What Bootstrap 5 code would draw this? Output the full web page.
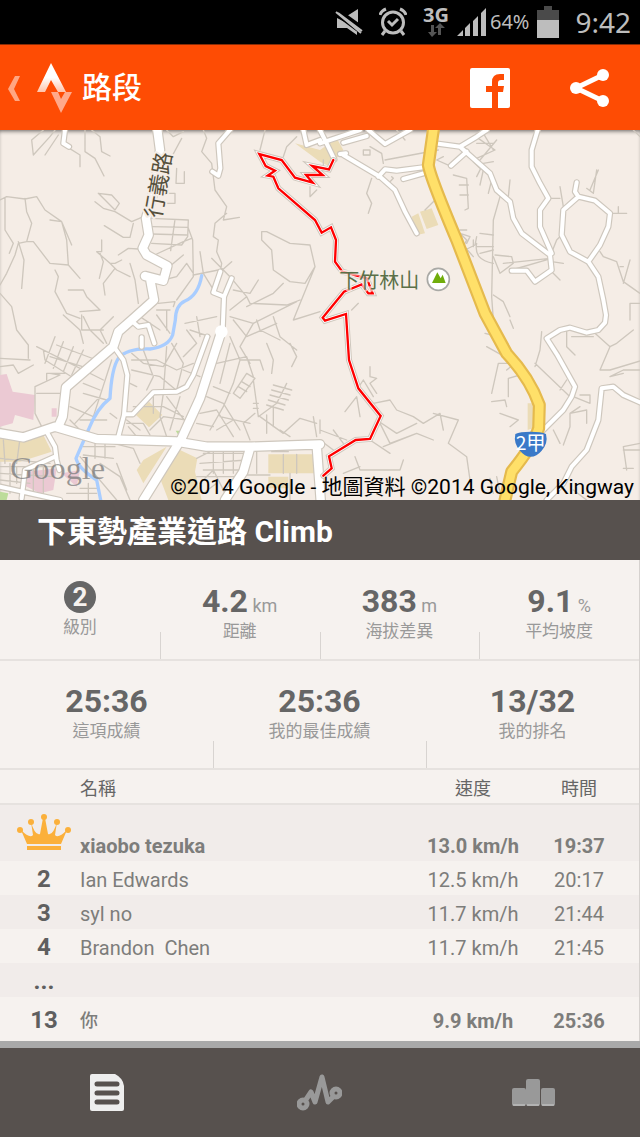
<!DOCTYPE html>
<html lang="zh-Hant">
<head>
<meta charset="utf-8">
<meta name="viewport" content="width=device-width, initial-scale=1">
<title>路段</title>
<link href="https://cdn.jsdelivr.net/npm/bootstrap@5.3.0/dist/css/bootstrap.min.css" rel="stylesheet">
<style>
  body { font-family: Roboto, "Noto Sans CJK TC", sans-serif; background: #fff; color: #666; }
  svg { display: block; flex-shrink: 0; }
  .status { background: #000; color: #bdbdbd; height: 44px; padding-right: 9px; }
  .net { font-size: 20px; line-height: 16px; font-weight: 700; font-family: "Open Sans", sans-serif; }
  .pct { font-size: 20px; line-height: 44px; font-family: "Noto Sans", sans-serif; }
  .clock { font-size: 28px; line-height: 44px; font-family: "Noto Sans", sans-serif; }
  .topbar { background: #fe4c04; height: 86px; border-top: 1px solid #8a2c06; }
  .topbar h1 { font-size: 30px; line-height: 40px; font-weight: 500; }
  .action { width: 100px; height: 84px; border: 0; }
  .map-view { height: 370px; background: #f5ede6; box-shadow: inset 0 3px 4px -2px #0009; }
  .credit { font-size: 21px; line-height: 26px; color: #000; right: 6px; bottom: 0; }
  .heading { background: #57514e; color: #fff; height: 60px; padding-left: 37px; }
  .heading h2 { font-size: 30px; line-height: 63px; font-weight: 700; }
  .panel { background: #f6f2ef; border-right: 1px solid #d6d2cf; }
  .stats { border-bottom: 2px solid #e6e2df; }
  .stats-a { height: 101px; }
  .stats-b { height: 109px; }
  .stat { padding-top: 20px; position: relative; }
  .stats-a .stat { padding-top: 21px; }
  .stat + .stat::before { content: ""; position: absolute; left: 0; bottom: 0; height: 27px; border-left: 1px solid #d8d4d1; }
  .num { font-size: 32px; line-height: 40px; font-weight: 700; color: #666; }
  .unit { font-size: 18px; line-height: 20px; font-weight: 400; color: #999; }
  .cap { font-size: 17px; line-height: 20px; color: #999; }
  .level { width: 32px; height: 32px; line-height: 32px; font-size: 26px; background: #666; color: #f6f2ef; }
  .board { table-layout: fixed; color: #7d7d7b; font-size: 20px; line-height: 24px; }
  .board th, .board td { padding: 4px 0 0; vertical-align: middle; }
  .board thead th { height: 34px; font-size: 18px; font-weight: 400; color: #666; border-bottom: 2px solid #e6e2df; }
  .board tbody tr { height: 34px; }
  .board tbody tr:nth-child(odd) { background: #f1ecea; }
  .board tbody .leader { height: 57px; }
  .board .leader td { padding-top: 26px; }
  .board tbody .mine { height: 44px; }
  .board .rank { font-size: 24px; font-weight: 700; color: #5f5f5f; padding: 2px 0 0 8px; text-align: center; }
  .you { font-size: 18px; font-weight: 500; }
  .c-rank { width: 80px; }
  .c-val { width: 106px; }
  .c-end { width: 7px; }
  .tabs { background: #57514e; border-top: 7px solid #a9a9a9; height: 96px; }
</style>
</head>
<body>
<div class="status d-flex justify-content-end align-items-center">
  <svg width="28" height="28" viewBox="0 0 28 28" fill="#bdbdbd"><path d="M2 10L10 14 18 19 22 22V27L12 20H2ZM12 8L23 1V15Z"/><path d="M0 4L28 25M3 3L28 21" stroke="#000" stroke-width="5"/><path d="M1 4L26 25M3 5L27 23" stroke="#bdbdbd" stroke-width="2"/></svg>
  <svg class="ms-3" width="28" height="30" viewBox="0 0 28 30" fill="none" stroke="#bdbdbd" stroke-width="3"><circle cx="14" cy="15.500" r="10.500"/><path d="M9 14L13 18 19 12M6 24L3 28M22 24L25 28M1 8Q2 4 7 2M27 8Q26 4 21 2"/></svg>
  <div class="ms-3 d-flex flex-column align-items-center"><span class="net">3G</span>
    <svg width="18" height="14" viewBox="0 0 18 14" fill="#555"><path d="M4 2H7V9H10L5 14 1 9H4ZM11 12V5H8L13 0 18 5H14V12Z"/></svg></div>
  <svg class="ms-2" width="29" height="28" viewBox="0 0 29 28" fill="#bdbdbd"><path d="M0 28L6 22V28ZM8 20L13 15V28H8ZM16 13L21 8V28H16ZM24 5L29 0V28H24Z"/></svg>
  <span class="pct ms-1">64%</span>
  <svg class="ms-2" width="22" height="32" viewBox="0 0 22 32"><path d="M7 0H15V4H22V14H0V4H7Z" fill="#4a4a4a"/><path d="M0 14H22V32H0Z" fill="#bdbdbd"/></svg>
  <span class="clock ms-3">9:42</span>
</div>
<header class="topbar d-flex align-items-center">
  <a href="#" class="d-flex align-items-center text-white text-decoration-none ps-2" aria-label="返回">
    <svg width="66" height="52" viewBox="0 0 66 52">
      <defs><linearGradient id="peak" x2="0" y2="1"><stop offset=".5" stop-color="#fff"/><stop offset="1" stop-color="#ffc4ab"/></linearGradient></defs>
      <path d="M7 14H12L6 27 12 39H7L0 27Z" fill="#ffa682"/>
      <path d="M43 1L58 30H50L43 18 37 30H29Z" fill="url(#peak)"/>
      <path d="M43 30H50L53 37 57 30H64L53 51Z" fill="#ffa98a"/>
    </svg>
  </a>
  <h1 class="m-0 ms-2 text-white">路段</h1>
  <button class="action btn ms-auto p-0 d-flex align-items-center justify-content-center" aria-label="Facebook">
    <svg width="40" height="40" viewBox="0 0 40 40"><rect width="40" height="40" rx="2" fill="#fff"/><path d="M22 40V24H16V18H22V14Q22 6 30 6H34V12H31Q28 12 28 15V18H34L33 24H28V40Z" fill="#fe4c04"/></svg>
  </button>
  <button class="action btn p-0 d-flex align-items-center justify-content-center" aria-label="分享">
    <svg width="40" height="38" viewBox="0 0 40 38"><path d="M33 6L6 19 33 32" fill="none" stroke="#fff" stroke-width="5"/><g fill="#fff"><circle cx="33" cy="6" r="6"/><circle cx="6" cy="19" r="6"/><circle cx="33" cy="32" r="6"/></g></svg>
  </button>
</header>
<main>
<section class="map-view position-relative overflow-hidden">
<svg class="w-100 h-100" viewBox="0 0 1920 1110" preserveAspectRatio="xMidYMid slice" fill="none" stroke-linejoin="round" stroke-linecap="round">
  <defs>
    <g id="main-roads">
      <path d="M472 0L480 60 465 170 438 265 446 315 428 355 440 375 502 408 490 452 435 438M450 445L462 510 395 570 355 605 340 650 198 772 188 860 175 890"/>
      <path d="M0 910L70 922 165 890 290 927 525 934 620 950 755 950 960 943M664 605L600 805 545 925 430 1110M750 955L730 1025 675 1110M950 945L962 1110"/>
    </g>
    <g id="side-roads">
      <path d="M195 0L190 40 207 50M690 0L655 40 661 115 655 137 637 125M661 425L640 487 672 500 695 445M672 500L668 600"/>
      <path d="M345 655L370 690 382 735 372 855 355 920M372 853L398 853 460 787 530 785 560 770 580 735 622 620M398 575L415 590 445 585 463 640M425 622V650M140 905L165 950 170 990 178 1020M165 980L75 1020 65 1105M0 1070L90 1090 180 1110"/>
      <path d="M960 0L975 30 1003 88M960 40L1080 0M910 0L920 45 960 30M1030 38L1100 18M1105 0L1155 42 1230 0M1020 72L1038 70M1030 75L1140 140 1185 180 1215 245 1250 310M1135 140L1155 118 1190 122 1270 112M1210 147L1270 130"/>
      <path d="M1305 40L1380 50 1430 20 1460 0M1380 50L1470 130 1490 180 1530 215 1540 265 1565 310 1650 375 1655 420 1605 455 1580 422H1535M1400 65L1353 107M1613 0L1595 60 1595 110 1620 160 1645 205 1620 240 1620 290 1655 370"/>
      <path d="M1730 157L1725 185 1735 200 1785 212 1830 250 1825 290 1800 345 1765 395 1710 365 1685 315 1690 240 1735 200M1765 395L1795 440 1810 510 1818 555 1815 578 1795 600 1760 608 1710 593 1680 600 1640 625 1672 675 1725 770 1715 800 1690 840 1625 905"/>
      <path d="M1960 835L1870 795 1840 770 1805 775 1795 870 1760 960 1715 1010 1690 1060 1640 1110"/>
    </g>
    <path id="highway" d="M1300 0L1285 105Q1290 140 1370 330L1455 550 1520 670Q1590 745 1618 825L1616 895Q1600 945 1535 1025L1515 1110"/>
    <path id="ride" d="M1000 90L987 118 937 108 968 135 918 135 938 158 885 143 845 90 778 72 797 108 825 122 803 137 820 140 835 175 945 270 965 308 993 292 1008 330 1005 395 1027 425 1100 445 1118 490 1105 490 1085 463 1032 485 968 563 975 572 1038 552 1047 690 1075 775 1142 858 1110 927 1067 930 987 979 995 1015 970 1037"/>
  </defs>
  <g fill="#ebdcb7">
    <path d="M0 927L130 915 155 965 60 995 0 995ZM447 815L487 855 447 892 408 855ZM410 1020L430 990 500 950 430 1060ZM540 960L592 985 585 1025 605 1110H505L480 1045ZM805 973H948V1030H805ZM805 1040H865V1075H805Z"/>
    <path d="M885 40L960 95 990 110 1030 60 1010 25 960 60ZM1235 260L1255 250 1275 310 1250 315ZM1260 245L1295 235 1315 285 1280 297ZM1583 820H1610V890L1583 900Z"/>
  </g>
  <path fill="#ebc9d3" d="M0 735L20 732 38 785 105 795 100 870 45 855 38 880 0 890ZM80 1025L170 1015 160 1080 120 1090 70 1065ZM155 835H170V860H155ZM185 1030L240 1020 230 1070Z"/>
  <path fill="#bddc9a" d="M0 1085L25 1090 20 1110H0ZM527 902L543 902 535 915Z"/>
  <g stroke="#cec7bd" stroke-width="4">
    <path d="M130 0L95 30 100 75 150 20 165 0M175 15L135 75M200 50L240 75V110M255 0V65L285 85 312 138M275 0L300 20 305 65 330 78M0 210L20 200 75 207 110 200 135 240 185 275 215 345M15 205V300L40 340 28 370M75 205L80 245 95 280 80 335 55 340 45 375 20 430 0 465M55 335L72 390 65 475M80 335L100 335 150 400 205 405M150 270L185 275 200 330 205 405 240 445"/>
    <path d="M295 190L335 195 358 220 345 240ZM285 215L310 235 345 245 395 275 425 262M313 287L370 322 390 322 400 280M305 330V365H290L330 400 345 400 365 390M300 370L310 395 298 445M330 400L350 420 390 440M345 415L310 460 315 495M355 375L385 355 415 357M390 400L405 450 415 520M165 420L175 440 165 485 200 550 240 565M0 490L35 530 50 600 85 645V685M205 480H250L260 500 300 540 240 545"/>
    <path d="M455 265L565 270 563 320 545 345 455 340M525 268L512 362M455 290L565 292M455 312L560 315M470 372L550 335 575 325M565 295L578 330 580 440 530 510M490 425L550 375M490 450L530 440 560 400 580 430M475 520L525 515 520 530M470 540H510M500 540V600M500 0L520 20 550 5M505 115V190H525V220H500M530 115L528 160H553V125M510 90L545 25"/>
    <path d="M610 0L620 25 605 65 635 100 645 180 680 230 670 270 718 262M680 250L645 280 640 320 655 330 650 365 665 400 661 425M580 435L655 420M600 365L610 430 645 487M695 395L661 425M635 385L690 440 740 500 750 520 860 525 900 510M785 305L800 305 870 340 930 345 945 410 915 460 870 455 820 420 815 360 785 330ZM795 0L780 60M850 80L860 50 890 20M930 170V200L950 180M945 410L880 570 960 545M700 480L750 490 775 450M740 530L820 490 850 460M760 580L890 515M690 540L740 500"/>
    <path d="M110 650L310 750M130 660L135 690 230 750M165 620L135 700M190 635L160 715M220 650L190 725M250 660L215 735M150 680L265 715M170 645L290 690M0 685L90 690M0 710L40 705 55 730 100 705M105 770L180 735 150 730H195M105 770V850L125 890M110 790H190M140 750V730H190M190 555L240 600 250 640M250 560L270 600 310 640M340 560L300 600 320 640M245 555V600H310M210 830L280 860 335 690M250 790L320 810M250 760L300 780M225 880L300 800M240 870L320 870M210 870L240 900M330 850L350 865"/>
    <path d="M395 670L430 700 490 710 530 640M395 720L480 740 540 790M430 660L460 740 440 780M395 690H470L530 720 580 700M500 650L490 790M390 760L410 770M515 640L550 700 530 780M550 680L590 640 560 600M550 720L600 740M400 830L490 830 550 860M460 800V850M490 790L480 860 500 920M420 900L380 870M385 890L410 920M500 800L560 880M540 800L510 900M450 900L490 860 560 870M380 880H430L450 915M555 580L650 560M570 600L630 620M590 560L600 620M420 560L480 600M470 555L510 610"/>
    <path d="M690 620L720 690 700 760 670 830 630 900M690 560L760 580 720 650 750 700M700 570L740 620 830 580M650 700L740 680 760 740M720 690L780 690 790 720M640 770L690 790M620 800L670 820 720 900M600 850L650 840 700 920M590 880L640 890M700 790L740 730 765 745 720 805ZM715 770L740 785M725 755L750 770M760 750L775 860 830 820 860 760M820 765L875 780M815 780L870 795M810 795L865 810M805 810L855 825M800 825L850 840M780 860L850 910 900 865 950 880M765 850L730 880 750 930M760 820H775M760 835H775M770 570L780 600 840 630M800 640L820 690 815 730M870 640L890 680 875 710M820 560L840 620 890 660M690 640L660 760M940 860L950 920M840 900L870 920M660 860L750 880M650 900L700 870M800 855V910M820 830V890"/>
    <path d="M0 985L150 1000M10 930L15 1000M60 925L50 1000M0 1010H170M0 1030L160 1040M0 1050L90 1060M30 1000V1090M50 1010V1060M100 1010V1090M130 1010V1090M250 950H345M250 975L340 985M285 940V985M315 940V985M240 980L350 1110M300 1000L360 1040 390 1110M350 1000L380 1080M340 940L400 955 420 1000M240 1075H290M200 1090H290M265 1060V1110M600 1000L740 990M610 970H730M610 1020H720M590 1040L710 1040M640 960V1030M670 965V1030M700 965V1030M600 1060L640 1020 680 1100M610 1090L650 1060M735 1035H810M850 973V1030M890 973V1030M815 965H865M590 985L640 960M870 1030V1110M770 960V1030"/>
    <path d="M970 90V120M1090 60H1110V75H1090ZM1110 50L1145 70 1150 100M1155 90L1315 60M1115 145L1100 190 1115 220 1105 250M1170 155L1180 145 1175 140M1100 0L1130 30M1190 0L1215 30M1275 240L1315 200M1330 80L1310 90 1355 110M1360 135L1400 145 1405 235 1395 240M1378 165H1405M1380 195H1405M1420 95L1440 115M1435 25L1485 60 1430 85M1450 10L1480 60M1430 40H1480M1440 90L1490 30M1430 140L1450 100 1480 95M1440 165L1450 120M1465 190L1475 150M1500 200L1480 270 1475 500 1480 570M1530 150L1525 200M1680 170L1690 230M1645 205H1680M1795 120L1770 180M1790 120L1780 190 1760 175M1830 250H1880M1855 250V230"/>
    <path d="M1370 300L1400 330 1390 350M1380 310L1410 320 1400 340M1400 300H1380M1395 360L1425 345 1430 320M1440 310L1480 315M1430 340Q1420 390 1480 400M1430 350L1480 350M1440 370L1480 360M1485 375L1535 380 1540 400 1500 430 1480 380M1510 400L1650 385M1535 420L1655 385M1650 380L1670 330 1690 310M1655 395L1690 400M1650 420L1680 450M1800 365L1810 380 1850 395 1870 455 1920 490M1870 460L1890 390M1860 410H1870M1920 520H1890V570M1480 495L1510 515 1530 560M1420 350V330M1350 300L1420 380M1055 540L1075 520M1900 0L1930 30"/>
    <path d="M1530 570L1540 595M1455 610L1475 615M1460 650L1550 700 1495 700 1475 790M1545 700L1520 720M1525 800V745L1560 735M1475 815L1515 810 1520 830M1500 850L1555 870 1530 890M1605 710L1620 660 1625 605M1605 700L1710 800M1700 600V650L1725 675M1715 620H1780M1785 610L1830 650 1850 640 1900 600M1830 650L1800 720 1830 720 1930 690M1830 740L1870 720 1920 720M1700 750L1680 780M1720 800L1770 820V795H1740M1740 830L1710 850V890M1710 850L1760 840 1760 880M1710 890L1690 945M1680 940L1660 900M1830 740L1870 730M1920 940L1870 950 1880 1020M1900 1015H1870M1920 960H1870"/>
    <path d="M1110 710L1110 740 1130 745 1110 760 1130 790M1090 750L1120 800M1070 780L1090 750M1035 845L1070 800 1080 860M1120 820L1170 810 1190 840 1240 860 1270 880 1320 850 1330 900M1300 850L1375 870 1345 940 1400 980 1410 1050M1130 870L1190 910 1250 880M1140 880L1170 940 1250 910M1150 950L1250 910 1300 930M1065 980L1080 1020 1200 1020 1210 990M960 900L1040 930M1000 900L1030 940M960 930L1000 960M960 870V910M1110 930L1170 970M1030 1030L1080 1010M1470 1045L1480 1090M1490 1040L1500 1090M1720 1080L1760 1110"/>
  </g>
  <path d="M605 437Q595 495 555 513Q527 525 526 570L518 615Q505 650 450 657Q380 655 355 685Q335 715 330 805Q290 835 265 900L228 985Q235 1015 290 1050L302 1110" stroke="#a9cdff" stroke-width="10"/>
  <use href="#main-roads" stroke="#cec7bd" stroke-width="32"/>
  <use href="#side-roads" stroke="#cec7bd" stroke-width="19"/>
  <use href="#main-roads" stroke="#fff" stroke-width="25"/>
  <use href="#side-roads" stroke="#fff" stroke-width="12"/>
  <circle cx="664" cy="605" r="19" fill="#fff"/>
  <use href="#highway" stroke="#e5ba4d" stroke-width="39"/>
  <use href="#highway" stroke="#ffe069" stroke-width="26"/>
  <g stroke-linejoin="miter">
    <use href="#ride" stroke="#cec7bd" stroke-width="18"/>
    <use href="#ride" stroke="#fff" stroke-width="12"/>
    <use href="#ride" stroke="#f00" stroke-width="7"/>
  </g>
  <g font-family="'Noto Sans CJK TC', sans-serif" paint-order="stroke" stroke="#f5ede6" stroke-width="12">
    <text x="1018" y="473" font-size="60" fill="#5a7048" stroke-opacity=".7">下竹林山</text>
    <text transform="translate(482 266) rotate(-80)" font-size="66" fill="#55503c">行義路</text>
  </g>
  <circle cx="1315" cy="448" r="33" fill="#fff" stroke="#a9a9a5" stroke-width="5"/>
  <path d="M1296 459L1312 427 1322 445 1328 434 1337 459Z" fill="#70ad0c"/>
  <path d="M1546 912Q1560 905 1592 905Q1624 905 1638 912Q1645 940 1625 962Q1610 980 1592 980Q1574 980 1560 962Q1540 940 1546 912Z" fill="#3a79c8"/>
  <text x="1592" y="960" text-anchor="middle" font-family="'Noto Sans CJK TC', sans-serif" font-size="58" fill="#fff">2甲</text>
  <text x="30" y="1047" font-family="'Liberation Serif', serif" font-size="97" fill="#777" fill-opacity=".75" stroke="#fff" stroke-opacity=".25">Google</text>
</svg>
<div class="credit position-absolute text-nowrap">©2014 Google - 地圖資料 ©2014 Google, Kingway</div>
</section>
<div class="heading"><h2 class="m-0 text-truncate">下東勢產業道路 Climb</h2></div>
<div class="panel">
  <div class="stats stats-a row g-0 text-center">
    <div class="stat col-3"><div class="num level rounded-circle mx-auto">2</div><div class="cap mt-1">級別</div></div>
    <div class="stat col-3"><div class="num">4.2<span class="unit"> km</span></div><div class="cap">距離</div></div>
    <div class="stat col-3"><div class="num">383<span class="unit"> m</span></div><div class="cap">海拔差異</div></div>
    <div class="stat col-3"><div class="num">9.1<span class="unit"> %</span></div><div class="cap">平均坡度</div></div>
  </div>
  <div class="stats stats-b row g-0 text-center">
    <div class="stat col-4"><div class="num">25:36</div><div class="cap">這項成績</div></div>
    <div class="stat col-4"><div class="num">25:36</div><div class="cap">我的最佳成績</div></div>
    <div class="stat col-4"><div class="num">13/32</div><div class="cap">我的排名</div></div>
  </div>
  <table class="board w-100">
    <colgroup><col class="c-rank"><col><col class="c-val"><col class="c-val"><col class="c-end"></colgroup>
    <thead><tr><th></th><th>名稱</th><th class="text-center">速度</th><th class="text-center">時間</th><th></th></tr></thead>
    <tbody>
      <tr class="leader fw-bold"><th class="rank"><svg class="mx-auto mb-1" width="54" height="38" viewBox="0 0 54 38" fill="#fbb03b"><path d="M10 31L4 17Q13 26 16 22L14 9Q18 23 23 21L26 5H28L31 21Q36 23 40 9L38 22Q41 26 50 17L44 31ZM10 33H44V37H10Z"/><circle cx="27" cy="4" r="3"/><circle cx="14" cy="9" r="3"/><circle cx="40" cy="9" r="3"/><circle cx="3" cy="17" r="3"/><circle cx="51" cy="17" r="3"/></svg></th><td>xiaobo tezuka</td><td class="text-center">13.0 km/h</td><td class="text-center">19:37</td><td></td></tr>
      <tr><th class="rank">2</th><td>Ian Edwards</td><td class="text-center">12.5 km/h</td><td class="text-center">20:17</td><td></td></tr>
      <tr><th class="rank">3</th><td>syl no</td><td class="text-center">11.7 km/h</td><td class="text-center">21:44</td><td></td></tr>
      <tr><th class="rank">4</th><td>Brandon&nbsp; Chen</td><td class="text-center">11.7 km/h</td><td class="text-center">21:45</td><td></td></tr>
      <tr><th class="rank">...</th><td></td><td></td><td></td><td></td></tr>
      <tr class="mine fw-bold"><th class="rank">13</th><td class="you">你</td><td class="text-center">9.9 km/h</td><td class="text-center">25:36</td><td></td></tr>
    </tbody>
  </table>
</div>
</main>
<nav class="tabs nav nav-fill flex-nowrap align-items-center">
  <a href="#" class="nav-item col-4" aria-label="詳情"><svg class="mx-auto" width="34" height="37" viewBox="0 0 34 37"><path d="M2 0H25Q33 4 34 12V35Q34 37 32 37H2Q0 37 0 35V2Q0 0 2 0Z" fill="#eee"/><path d="M7 10H27M7 19H27M7 28H27" stroke="#57514e" stroke-width="5" stroke-linecap="round"/></svg></a>
  <a href="#" class="nav-item col-4" aria-label="分析"><svg class="mx-auto" width="45" height="37" viewBox="0 0 45 37" fill="none" stroke="#999" stroke-width="5" stroke-linejoin="round"><circle cx="6" cy="30" r="4"/><circle cx="39" cy="19" r="4"/><path d="M8 27L14 18 18 28 25 3 31 28 37 22"/></svg></a>
  <a href="#" class="nav-item col-4" aria-label="排行榜"><svg class="mx-auto" width="43" height="27" viewBox="0 0 43 27" fill="#999"><rect y="9" width="14" height="18" rx="2"/><rect x="14" width="14" height="27" rx="2"/><rect x="29" y="9" width="14" height="18" rx="2"/><path d="M1 26H13M15 26H27M30 26H42" stroke="#ccc"/></svg></a>
</nav>
<script src="https://cdn.jsdelivr.net/npm/bootstrap@5.3.0/dist/js/bootstrap.bundle.min.js"></script>
</body>
</html>
